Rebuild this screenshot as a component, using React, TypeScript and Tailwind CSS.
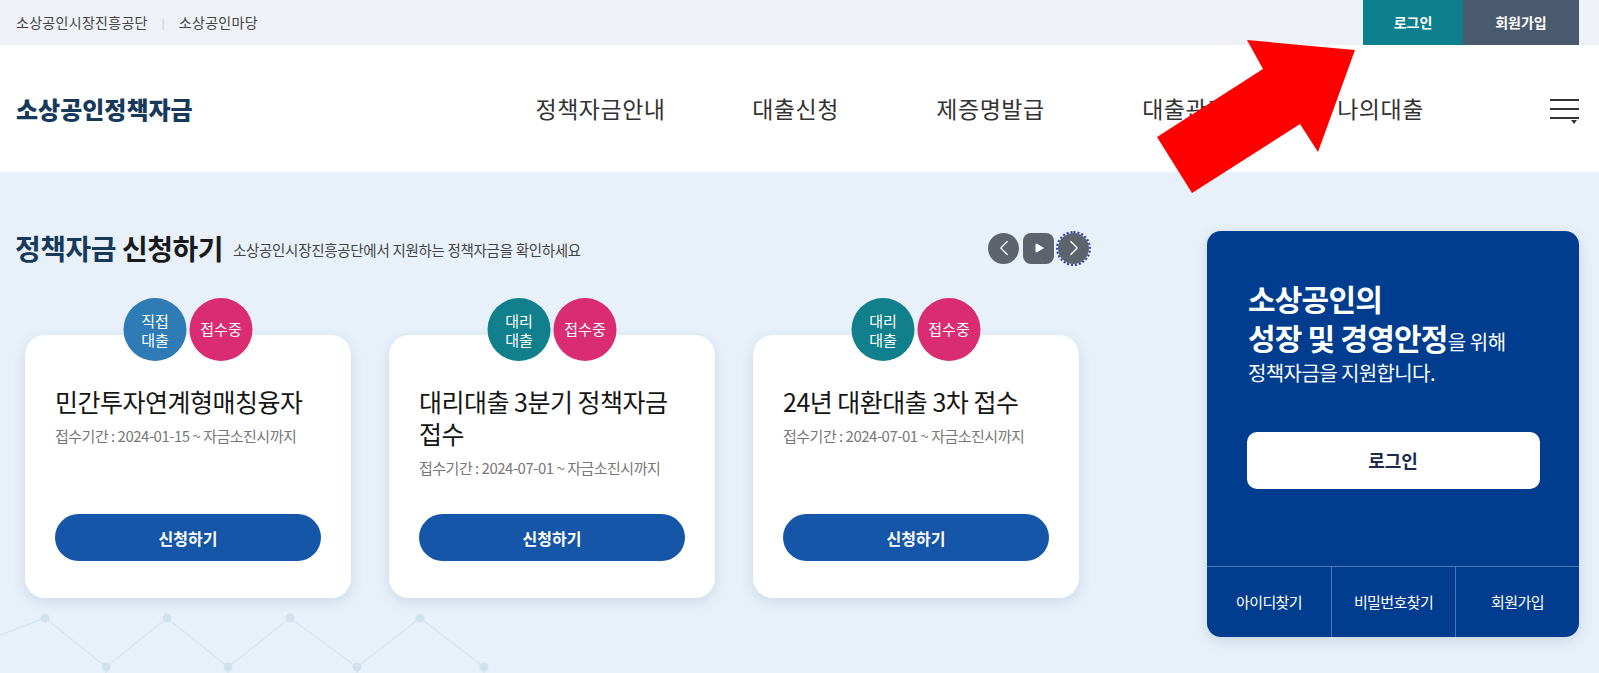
import { ChevronLeft, ChevronRight, Play } from 'lucide-react'

const font = { fontFamily: '"Noto Sans CJK KR", "Noto Sans", sans-serif' }

const cards = [
  { kind: ['직접', '대출'], kindColor: 'bg-[#2e7bb5]', title: '민간투자연계형매칭융자', period: '접수기간 : 2024-01-15 ~ 자금소진시까지' },
  { kind: ['대리', '대출'], kindColor: 'bg-[#11808c]', title: '대리대출 3분기 정책자금 접수', period: '접수기간 : 2024-07-01 ~ 자금소진시까지' },
  { kind: ['대리', '대출'], kindColor: 'bg-[#11808c]', title: '24년 대환대출 3차 접수', period: '접수기간 : 2024-07-01 ~ 자금소진시까지' },
]

const nav = ['정책자금안내', '대출신청', '제증명발급', '대출관리', '나의대출']

function Hexagons() {
  const top = [45, 167, 290, 420]
  const bottom = [106, 228, 357, 484]
  return (
    <svg className="absolute left-0 top-[430px] pointer-events-none" width="560" height="71" viewBox="0 0 560 71">
      <g stroke="#d8e6f0" strokeWidth="1.5" fill="none">
        <line x1="0" y1="33" x2="45" y2="16" />
        {top.map((x, i) => (
          <g key={i}>
            {bottom[i - 1] !== undefined && <line x1={x} y1="16" x2={bottom[i - 1]} y2="65" />}
            <line x1={x} y1="16" x2={bottom[i]} y2="65" />
          </g>
        ))}
        {bottom.map((x) => (
          <line key={x} x1={x} y1="65" x2={x} y2="71" />
        ))}
      </g>
      <g fill="#d2e2ed">
        {top.map((x) => <circle key={x} cx={x} cy="16" r="4.5" />)}
        {bottom.map((x) => <circle key={x} cx={x} cy="65" r="4.5" />)}
      </g>
    </svg>
  )
}

function Card({ card }: { card: (typeof cards)[number] }) {
  return (
    <div className="relative flex h-[263px] w-[326px] shrink-0 flex-col rounded-[20px] bg-white px-[30px] pb-[37px] pt-[50px] shadow-[0_4px_14px_rgba(20,60,110,0.13)]">
      <div className="absolute -top-[37px] left-1/2 flex -translate-x-1/2 gap-[3px]">
        <div className={`flex h-[63px] w-[63px] flex-col items-center justify-center rounded-full ${card.kindColor} text-[15px] leading-[19px] text-white`}>
          <span>{card.kind[0]}</span>
          <span>{card.kind[1]}</span>
        </div>
        <div className="flex h-[63px] w-[63px] items-center justify-center rounded-full bg-[#d92c72] text-[15px] text-white">
          접수중
        </div>
      </div>
      <h3 className="text-[25px] font-normal leading-[32px] tracking-[-0.5px] text-[#151515]">{card.title}</h3>
      <p className="mt-[9px] text-[15px] leading-[20px] tracking-[-0.5px] text-[#777]">{card.period}</p>
      <button className="mt-auto h-[47px] w-full rounded-full bg-[#1556a8] text-[16px] font-bold text-white">
        신청하기
      </button>
    </div>
  )
}

export default function App() {
  return (
    <div className="relative h-[673px] w-[1599px] overflow-hidden bg-[#e8f1f9]" style={font}>
      {/* utility bar */}
      <div className="flex h-[45px] items-center justify-between bg-[#eef1f5] pl-[16px] pr-[20px]">
        <div className="flex items-center text-[14px] tracking-[0.3px] text-[#444]">
          <span>소상공인시장진흥공단</span>
          <span className="mx-[14px] text-[10px] text-[#bbb]">|</span>
          <span>소상공인마당</span>
        </div>
        <div className="flex h-full">
          <a className="flex w-[100px] items-center justify-center bg-[#0b7f8e] text-[14px] font-bold text-white">로그인</a>
          <a className="flex w-[116px] items-center justify-center bg-[#4a5a6e] text-[14px] font-bold text-white">회원가입</a>
        </div>
      </div>

      {/* header */}
      <header className="flex h-[127px] items-center bg-white pl-[16px] pr-[20px]">
        <div className="w-[487px] text-[24px] font-black tracking-[0px] text-[#17395a]">소상공인정책자금</div>
        <nav className="flex">
          {nav.map((n) => (
            <a key={n} className="w-[195px] text-center text-[23px] tracking-[0.5px] text-[#333]">
              {n}
            </a>
          ))}
        </nav>
        <div className="ml-auto flex h-[20px] w-[29px] flex-col justify-between">
          <span className="h-[2px] w-full bg-[#333]" />
          <span className="h-[2px] w-full bg-[#333]" />
          <span className="relative h-[2px] w-full bg-[#333]">
            <span className="absolute right-[2px] top-[3px] h-0 w-0 border-x-[3px] border-t-[4px] border-x-transparent border-t-[#333]" />
          </span>
        </div>
      </header>

      {/* main */}
      <main className="relative flex">
        <Hexagons />
        <section className="relative flex-1 pl-[15px] pr-[118px] pt-[59px]">
          <div className="flex h-[34px] items-center justify-between">
            <div className="flex items-center">
              <h2 className="text-[28px] font-bold tracking-[-0.5px] text-[#17395a]">
                정책자금 <span className="text-[#1a1a1a]">신청하기</span>
              </h2>
              <span className="ml-[10px] mt-[4px] text-[14.5px] tracking-[-0.3px] text-[#444]">
                소상공인시장진흥공단에서 지원하는 정책자금을 확인하세요
              </span>
            </div>
            <div className="flex items-center gap-[4px]">
              <button className="flex h-[31px] w-[31px] items-center justify-center rounded-full bg-[#5d646d] text-white">
                <ChevronLeft size={26} strokeWidth={1.1} />
              </button>
              <button className="flex h-[31px] w-[31px] items-center justify-center rounded-[8px] bg-[#5d646d] text-white">
                <Play size={12} fill="white" strokeWidth={0} />
              </button>
              <button className="flex h-[31px] w-[31px] items-center justify-center rounded-full bg-[#5d646d] text-white outline-dotted outline-2 outline-[#2a3fb0]">
                <ChevronRight size={26} strokeWidth={1.1} />
              </button>
            </div>
          </div>

          <div className="mt-[70px] flex gap-[38px] pl-[10px]">
            {cards.map((c) => (
              <Card key={c.title} card={c} />
            ))}
          </div>
        </section>

        <aside className="mr-[20px] mt-[59px] flex h-[406px] w-[372px] flex-col rounded-[14px] bg-[#003d8f] text-white shadow-[0_4px_14px_rgba(20,60,110,0.15)]">
          <div className="pl-[41px] pt-[48px]">
            <p className="text-[30px] font-bold leading-[39px] tracking-[-0.8px]">소상공인의</p>
            <p className="text-[30px] font-bold leading-[39px] tracking-[-0.8px]">
              성장 및 경영안정<span className="text-[20px] font-normal tracking-[-0.4px]">을 위해</span>
            </p>
            <p className="text-[20px] leading-[24px] tracking-[-0.6px]">정책자금을 지원합니다.</p>
          </div>
          <button className="mx-auto mt-[47px] h-[57px] w-[293px] rounded-[10px] bg-white text-[18px] font-bold text-[#1a2b4d]">
            로그인
          </button>
          <div className="mt-auto grid h-[71px] grid-cols-3 border-t border-[#4f74b0] text-[15px] tracking-[-0.6px]">
            <a className="flex items-center justify-center">아이디찾기</a>
            <a className="flex items-center justify-center border-l border-[#4f74b0]">비밀번호찾기</a>
            <a className="flex items-center justify-center border-l border-[#4f74b0]">회원가입</a>
          </div>
        </aside>
      </main>

      {/* annotation arrow */}
      <svg className="pointer-events-none absolute left-0 top-0" width="1599" height="673">
        <polygon
          points="1263,69 1247,40 1355,50 1318,152 1300,124 1192,193 1157,137"
          fill="#ff0000"
        />
      </svg>
    </div>
  )
}
